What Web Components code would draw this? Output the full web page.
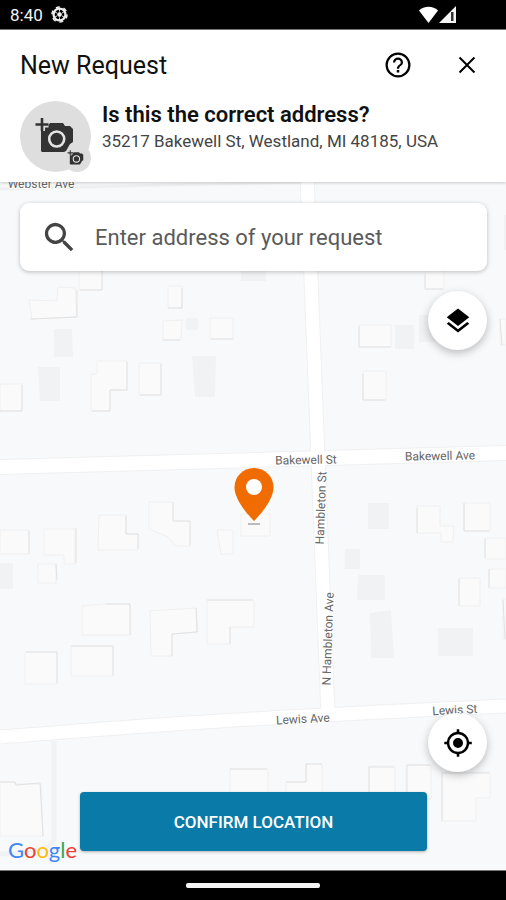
<!DOCTYPE html>
<html lang="en">
<head>
<meta charset="utf-8">
<meta name="viewport" content="width=device-width, initial-scale=1">
<title>New Request</title>
<style>
  body {
    margin: 0;
    font-family: Roboto, "Noto Sans", sans-serif;
    color: #111;
  }
</style>
</head>
<body>
<request-screen>
  <status-bar slot="status" time="8:40"></status-bar>
  <request-header slot="header" heading="New Request">
    <photo-avatar slot="avatar"></photo-avatar>
    <span slot="question">Is this the correct address?</span>
    <span slot="address">35217 Bakewell St, Westland, MI 48185, USA</span>
  </request-header>
  <map-panel slot="map">
    <street-map slot="map"></street-map>
    <address-search slot="search" placeholder="Enter address of your request"></address-search>
    <round-button slot="layers" label="Map layers">
      <svg viewBox="0 0 24 24" width="30" height="30"><path d="M12 18.5 4.6 12.8 3 14.1l9 7 9-7-1.600-1.300zM12 16l9-7-9-7-9 7z"/></svg>
    </round-button>
    <round-button slot="locate" label="My location">
      <svg viewBox="0 0 24 24" width="30" height="30"><path d="M12 8a4 4 0 1 0 0 8 4 4 0 0 0 0-8zm8.940 3A8.990 8.990 0 0 0 13 3.060V1h-2v2.060A8.990 8.990 0 0 0 3.060 11H1v2h2.060A8.990 8.990 0 0 0 11 20.940V23h2v-2.060A8.990 8.990 0 0 0 20.940 13H23v-2zM12 19a7 7 0 1 1 0-14 7 7 0 0 1 0 14z"/></svg>
    </round-button>
    <confirm-button slot="confirm">CONFIRM LOCATION</confirm-button>
  </map-panel>
  <nav-handle slot="nav"></nav-handle>
</request-screen>

<script>
class RequestScreen extends HTMLElement {
  connectedCallback() {
    this.attachShadow({ mode: 'open' });
    this.shadowRoot.innerHTML = `
      <style>
        :host {
          display: flex;
          flex-direction: column;
          min-height: 100vh;
          background: #fff;
        }
        .map {
          flex: 1;
          display: grid;
        }
      </style>
      <slot name="status"></slot>
      <slot name="header"></slot>
      <main class="map"><slot name="map"></slot></main>
      <slot name="nav"></slot>
    `;
  }
}

class StatusBar extends HTMLElement {
  connectedCallback() {
    this.attachShadow({ mode: 'open' });
    this.shadowRoot.innerHTML = `
      <style>
        :host {
          display: flex;
          align-items: center;
          gap: 8px;
          height: 30px;
          padding: 0 50px 0 10px;
          box-sizing: border-box;
          border-bottom: 1px solid #777;
          background: #000;
          color: #f4f4f4;
          font-size: 17px;
        }
        .signal {
          display: flex;
          gap: 1px;
          margin-left: auto;
        }
      </style>
      <span>${this.getAttribute('time')}</span>
      <svg width="17" height="17" viewBox="0 0 18 18" fill="none" stroke="#f0f0f0">
        <circle cx="9" cy="9" r="6.300" stroke-width="2.400"/>
        <circle cx="9" cy="9" r="8" stroke-width="1.600" stroke-dasharray="4.200 4.180"/>
        <circle cx="9" cy="9" r="2" fill="#f0f0f0"/>
        <path d="M9 3v3M9 12v3M3.800 6l2.600 1.500M11.600 10.500 14.200 12M3.800 12l2.600-1.500M11.600 7.500 14.200 6" stroke-width="1"/>
      </svg>
      <div class="signal">
        <svg width="19" height="17" viewBox="0 0 19 17" fill="#fff"><path d="M0 4.500C5-.5 14-.5 19 4.500L9.500 17z"/></svg>
        <svg width="17" height="17" viewBox="0 0 17 17"><path d="M17 0v17H0z" fill="#f4f4f4"/><path d="M12 6h2.500v9H12z" fill="#333"/></svg>
      </div>
    `;
  }
}

class RequestHeader extends HTMLElement {
  connectedCallback() {
    this.attachShadow({ mode: 'open' });
    this.shadowRoot.innerHTML = `
      <style>
        :host {
          display: block;
          position: relative;
          z-index: 1;
          padding: 0 20px 9px;
          background: #fff;
          box-shadow: 0 1px 3px rgba(0, 0, 0, 0.2);
        }
        .bar {
          display: flex;
          align-items: center;
          gap: 40px;
          height: 70px;
          padding-right: 5px;
        }
        h1 {
          flex: 1;
          margin: 0;
          font-size: 25px;
          font-weight: 400;
        }
        button {
          display: flex;
          padding: 0;
          border: 0;
          background: none;
          cursor: pointer;
        }
        .card {
          display: flex;
          gap: 10px;
          padding-top: 1px;
        }
        h2 {
          margin: 0;
          font-size: 22px;
          font-weight: 600;
          line-height: 28px;
        }
        p {
          margin: 0;
          color: #444;
          font-size: 17px;
          line-height: 24px;
        }
      </style>
      <header class="bar">
        <h1>${this.getAttribute('heading')}</h1>
        <button aria-label="Help">
          <svg width="30" height="30" viewBox="0 0 24 24"><path d="M11 18h2v-2h-2zm1-16a10 10 0 1 0 0 20 10 10 0 0 0 0-20zm0 18.200a8.200 8.200 0 1 1 0-16.400 8.200 8.200 0 0 1 0 16.400zM12 6a4 4 0 0 0-4 4h1.800a2.200 2.200 0 1 1 4.400 0c0 2-3.100 1.800-3.100 5h1.800c0-2.300 3.100-2.500 3.100-5a4 4 0 0 0-4-4z"/></svg>
        </button>
        <button aria-label="Close">
          <svg width="28" height="28" viewBox="0 0 24 24"><path d="M19 6.200 17.800 5 12 10.800 6.200 5 5 6.200l5.800 5.800L5 17.800 6.200 19l5.800-5.800 5.800 5.800 1.200-1.200-5.800-5.800z"/></svg>
        </button>
      </header>
      <div class="card">
        <slot name="avatar"></slot>
        <div>
          <h2><slot name="question"></slot></h2>
          <p><slot name="address"></slot></p>
        </div>
      </div>
    `;
  }
}

class PhotoAvatar extends HTMLElement {
  connectedCallback() {
    this.attachShadow({ mode: 'open' });
    this.shadowRoot.innerHTML = `
      <style>
        :host {
          display: flex;
          flex: none;
        }
        button {
          display: flex;
          padding: 0;
          border: 0;
          background: none;
          cursor: pointer;
        }
      </style>
      <button aria-label="Add a photo">
        <svg width="72" height="72" viewBox="0 0 72 72">
          <defs>
            <g id="camera">
              <path d="M30 22h13l2 3h5l3 3v13l-3 2-4 7-2 1H22l-1-1V26h6z" fill="#333"/>
              <circle cx="36.700" cy="38" r="7.500" fill="#333" stroke="#e4e4e4" stroke-width="2.600"/>
              <path d="M22 17v13M15.500 23.500h13" stroke="#dedede" stroke-width="6"/>
              <path d="M22 17v13M15.500 23.500h13" stroke="#333" stroke-width="2.600"/>
            </g>
          </defs>
          <circle cx="35.500" cy="35.500" r="35.500" fill="#dedede"/>
          <circle cx="57" cy="57" r="14" fill="#dedede"/>
          <use href="#camera"/>
          <use href="#camera" transform="translate(41 42) scale(.42)"/>
        </svg>
      </button>
    `;
  }
}

class MapPanel extends HTMLElement {
  connectedCallback() {
    this.attachShadow({ mode: 'open' });
    this.shadowRoot.innerHTML = `
      <style>
        :host {
          display: grid;
          position: relative;
          background: #f8f9fb;
        }
        .backdrop {
          position: absolute;
          inset: 0;
        }
        .controls {
          position: relative;
          display: flex;
          flex-direction: column;
          align-items: flex-end;
          gap: 20px;
          padding: 21px 19px 19px 20px;
        }
        .search {
          align-self: stretch;
        }
        .locate {
          margin-top: auto;
        }
        .confirm {
          align-self: stretch;
          padding: 0 60px;
        }
      </style>
      <div class="backdrop"><slot name="map"></slot></div>
      <div class="controls">
        <div class="search"><slot name="search"></slot></div>
        <slot name="layers"></slot>
        <div class="locate"><slot name="locate"></slot></div>
        <div class="confirm"><slot name="confirm"></slot></div>
      </div>
    `;
  }
}

class StreetMap extends HTMLElement {
  connectedCallback() {
    this.attachShadow({ mode: 'open' });
    this.shadowRoot.innerHTML = `
      <style>
        :host {
          display: block;
          height: 100%;
        }
        svg {
          display: block;
          width: 100%;
          height: 100%;
        }
        .road {
          fill: none;
          stroke: #fff;
        }
        .edge {
          fill: none;
          stroke: #eff0f1;
        }
        .house {
          fill: #fafafa;
          stroke: #f0f0f0;
        }
        .shade {
          fill: none;
          stroke: #e2e2e2;
        }
        .shed {
          fill: #f1f2f4;
        }
        .label {
          fill: #666;
          stroke: #fff;
          stroke-width: 2px;
          paint-order: stroke;
          font-size: 12px;
          text-anchor: middle;
        }
        .logo {
          position: absolute;
          left: 8px;
          bottom: 6px;
          color: #4285f4;
          font-family: Lato, sans-serif;
          font-size: 22px;
          line-height: 28px;
        }
        .r { color: #ea4335; }
        .y { color: #fbbc05; }
        .g { color: #34a853; }
      </style>
      <svg viewBox="0 182 506 688" preserveAspectRatio="xMidYMid slice" role="img" aria-label="Map around 35217 Bakewell St">
        <!-- road edges, then the roads over them -->
        <g class="edge">
          <path d="M0 189 300 182" stroke-width="3"/>
          <path d="M307 176 328 716" stroke-width="15"/>
          <path d="M0 467 506 453" stroke-width="16"/>
          <path d="M0 737C120 728 200 720 506 706" stroke-width="15"/>
          <path d="M54 741V840Q50 852 0 854" stroke-width="5" stroke="#f1f2f3"/>
        </g>
        <g class="road">
          <path d="M307 176 328 716" stroke-width="13"/>
          <path d="M0 467 506 453" stroke-width="14"/>
          <path d="M0 737C120 728 200 720 506 706" stroke-width="13"/>
        </g>
        <g class="shed">
          <path d="M54 329h18l1 28H54zM38 367h22v34H40zM186 318h12v12h-12zM192 356h24l-1 41h-20zM241 262h25v19h-25zM395 325h19v24h-19zM419 315h30v27h-30zM504 215h2v35h-2z"/>
          <path d="M0 563h13v26H0zM368 503h21v26h-21zM345 549h15v20h-15zM358 575h27v25h-28zM370 613l21-3 3 48h-23zM438 628h35v28h-35z"/>
        </g>
        <g class="house">
          <path d="M79 262h23v28H79zM57 301l1-14 17 1 2 29-45 2-3-19zM168 286h14v22h-14zM163 321l19-1-1 20h-18zM210 318h23v21h-23zM0 384h22v27H0zM97 361h30v29h-17v21H91V374h6zM139 363h22v32h-22zM425 270h19v19h-19zM359 325h32v22h-32zM363 371h23v29h-23zM500 319h6v26h-6z"/>
          <path d="M0 530h29v24H0zM44 529h31v35H64v-9H44zM38 564h18v19H38zM99 515h27v19h12v16H98zM149 502h24v19h17v25h-15l-7-9-19-8zM217 530h16v24h-12zM241 514h29v22h-29zM417 506h23v20h14l-1 16h-12v-9h-24zM464 503h26v28h-26zM485 538h21v21h-21zM489 569h17v19h-17zM459 578h21v28h-21zM503 599h3v40h-3z"/>
          <path d="M82 606l22-2h26v31H82zM71 646h42v30H71zM25 652h32v32H25zM150 611l46-3 2 24-26 2v22h-21zM207 600h47v27h-24v17h-23zM0 782h15v2h26l2 52H0zM230 769h38v28h-38zM286 782h20v-18h16v34h-36zM369 766h26v30h-26zM406 765h25v34h-25zM442 772h48v26h-14v23h-34z"/>
        </g>
        <g class="shade">
          <path d="M30 319l47-2V290M102 271v19H80M168 308h14v-20M163 340h17M211 339h22M22 385v26H0M127 362v28h-17v21H92M161 364v31h-21M359 327v20h32M363 374v26h22M425 275v14h18M500 319l2 26"/>
          <path d="M29 531v23M76 528v35M56 564l1 16M126 516v18h12v15M173 502v19h17v24M417 508v25M464 503v28h25M485 539v19M489 588v-19M459 606v-27M503 600l2 39M106 604h24v31M71 646h42v30M26 652h31v31M196 608l1 24-25 2v22M207 600h46M230 627v17M0 782h15l1 3 24-2 3 53M230 769h37M286 782h20v-18h16M369 796v-29h25M407 799v-34h23M442 821v-48h47"/>
        </g>
        <text class="label" transform="translate(41 188)">Webster Ave</text>
        <text class="label" transform="translate(306 464) rotate(-1)">Bakewell St</text>
        <text class="label" transform="translate(440 460) rotate(-1)">Bakewell Ave</text>
        <text class="label" transform="translate(325 508) rotate(-88)">Hambleton St</text>
        <text class="label" transform="translate(332 639) rotate(-88)">N Hambleton Ave</text>
        <text class="label" transform="translate(303 723) rotate(-3)">Lewis Ave</text>
        <text class="label" transform="translate(455 714) rotate(-3)">Lewis St</text>
        <path d="M248 524h12" stroke="#bbb" stroke-width="2"/>
        <path d="M254 468c-11 0-19.500 8.500-19.500 19.500C234.500 502 254 521 254 521s19.500-19 19.500-33.500C273.500 476.500 265 468 254 468z" fill="#f06c00"/>
        <circle cx="254" cy="487" r="8" fill="#fff"/>
      </svg>
      <div class="logo">G<span class="r">o</span><span class="y">o</span>g<span class="g">l</span><span class="r">e</span></div>
    `;
  }
}

class AddressSearch extends HTMLElement {
  connectedCallback() {
    this.attachShadow({ mode: 'open' });
    this.shadowRoot.innerHTML = `
      <style>
        :host {
          display: block;
        }
        label {
          display: flex;
          align-items: center;
          gap: 16px;
          height: 68px;
          padding: 0 20px;
          border-radius: 9px;
          background: #fff;
          box-shadow: 0 1px 4px rgba(0, 0, 0, 0.25);
        }
        svg {
          flex: none;
        }
        input {
          flex: 1;
          min-width: 0;
          padding: 0;
          border: 0;
          outline: 0;
          background: none;
          color: #222;
          font: inherit;
          font-size: 22px;
        }
        input::placeholder {
          color: #5a5a5a;
          opacity: 1;
        }
      </style>
      <label>
        <svg width="39" height="39" viewBox="0 0 24 24" fill="#444"><path d="M15.500 14h-.790l-.280-.270a6.500 6.500 0 1 0-.700.700l.270.280v.790l5 4.990L20.490 19zm-6 0a4.500 4.500 0 1 1 0-9 4.500 4.500 0 0 1 0 9z"/></svg>
        <input type="text" aria-label="Address" placeholder="${this.getAttribute('placeholder')}">
      </label>
    `;
  }
}

class RoundButton extends HTMLElement {
  connectedCallback() {
    this.attachShadow({ mode: 'open' });
    this.shadowRoot.innerHTML = `
      <style>
        :host {
          display: block;
        }
        button {
          display: grid;
          place-items: center;
          width: 59px;
          height: 59px;
          padding: 0;
          border: 0;
          border-radius: 50%;
          background: #fff;
          box-shadow: 0 3px 8px rgba(0, 0, 0, 0.25);
          cursor: pointer;
        }
      </style>
      <button aria-label="${this.getAttribute('label')}"><slot></slot></button>
    `;
  }
}

class ConfirmButton extends HTMLElement {
  connectedCallback() {
    this.attachShadow({ mode: 'open' });
    this.shadowRoot.innerHTML = `
      <style>
        :host {
          display: block;
        }
        button {
          width: 100%;
          height: 59px;
          border: 0;
          border-radius: 4px;
          background: #0a7aa8;
          box-shadow: 0 1px 3px rgba(0, 0, 0, 0.3);
          color: #fff;
          font: inherit;
          font-size: 17px;
          font-weight: 500;
          cursor: pointer;
        }
      </style>
      <button><slot></slot></button>
    `;
  }
}

class NavHandle extends HTMLElement {
  connectedCallback() {
    this.attachShadow({ mode: 'open' });
    this.shadowRoot.innerHTML = `
      <style>
        :host {
          display: grid;
          place-items: center;
          height: 29px;
          border-top: 1px solid #777;
          background: #000;
        }
        div {
          width: 134px;
          height: 5px;
          border-radius: 2px;
          background: #f4f4f4;
        }
      </style>
      <div></div>
    `;
  }
}

customElements.define('request-screen', RequestScreen);
customElements.define('status-bar', StatusBar);
customElements.define('request-header', RequestHeader);
customElements.define('photo-avatar', PhotoAvatar);
customElements.define('map-panel', MapPanel);
customElements.define('street-map', StreetMap);
customElements.define('address-search', AddressSearch);
customElements.define('round-button', RoundButton);
customElements.define('confirm-button', ConfirmButton);
customElements.define('nav-handle', NavHandle);
</script>
</body>
</html>
